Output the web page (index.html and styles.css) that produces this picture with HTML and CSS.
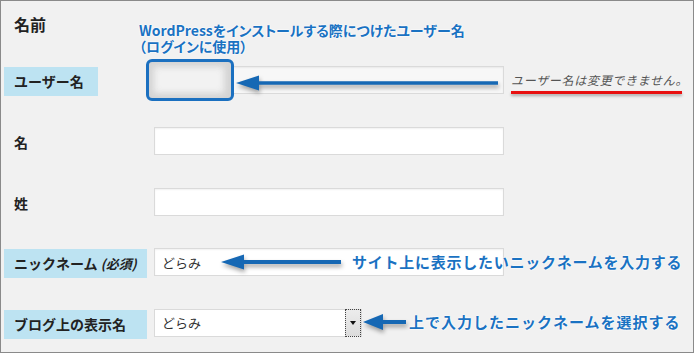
FILE: index.html
```html
<!DOCTYPE html>
<html lang="ja">
<head>
<meta charset="utf-8">
<link rel="stylesheet" href="styles.css">
</head>
<body>
<div class="frame">
  <h2 class="heading">名前</h2>
  <div class="form">
    <div class="row">
      <div class="label-cell"><span class="label label-hl label-short">ユーザー名</span></div>
      <div class="field field-disabled"></div>
      <span class="desc">ユーザー名は変更できません。</span>
    </div>
    <div class="row">
      <div class="label-cell"><span class="label">名</span></div>
      <div class="field"></div>
    </div>
    <div class="row">
      <div class="label-cell"><span class="label">姓</span></div>
      <div class="field"></div>
    </div>
    <div class="row">
      <div class="label-cell"><span class="label label-hl label-wide">ニックネーム <em class="req">(必須)</em></span></div>
      <div class="field"><span class="value">どらみ</span></div>
    </div>
    <div class="row">
      <div class="label-cell"><span class="label label-hl label-wide">ブログ上の表示名</span></div>
      <div class="select"><span class="value">どらみ</span><span class="select-btn"><span class="tri"></span></span></div>
    </div>
  </div>

  <div class="note note-top">WordPressをインストールする際につけたユーザー名<br>（ログインに使用）</div>
  <div class="highlight"><div class="blur"></div></div>
  <svg class="arrow arrow-1" width="268" height="26" viewBox="0 0 268 26">
    <path d="M2 12 L25 4.5 L25 10.2 L264 10.2 L264 13.8 L25 13.8 L25 19.5 Z" fill="#1668b4"/>
  </svg>
  <div class="underline"></div>
  <svg class="arrow arrow-2" width="126" height="26" viewBox="0 0 126 26">
    <path d="M2 12 L25 4.5 L25 10 L122 10 L122 14 L25 14 L25 19.5 Z" fill="#1668b4"/>
  </svg>
  <div class="note note-nick">サイト上に表示したいニックネームを入力する</div>
  <svg class="arrow arrow-3" width="48" height="26" viewBox="0 0 48 26">
    <path d="M2 12 L22 4 L22 10 L45 10 L45 14 L22 14 L22 20 Z" fill="#1668b4"/>
  </svg>
  <div class="note note-select">上で入力したニックネームを選択する</div>
</div>
</body>
</html>
```

FILE: styles.css
```css
* { box-sizing: border-box; }
html, body { margin: 0; padding: 0; background: #fff; }
body { font-family: "Noto Sans CJK JP", "Noto Sans", sans-serif; }

.frame {
  position: relative;
  width: 694px;
  height: 353px;
  border: 1px solid #8a8a8a;
  background: #f1f1f1;
  padding: 12px 0 0 3px;
  overflow: hidden;
}

.heading {
  margin: 0 0 0 10px;
  font-size: 16px;
  line-height: 22px;
  font-weight: 700;
  color: #222;
}

.form {
  margin-top: 31px;
  display: flex;
  flex-direction: column;
  gap: 32.75px;
}

.row {
  display: flex;
  align-items: flex-start;
  height: 28px;
}

.label-cell { width: 150px; flex: none; }

.label {
  display: block;
  height: 29px;
  margin-top: 1px;
  padding-left: 10px;
  font-size: 14px;
  line-height: 29px;
  font-weight: 700;
  color: #222;
  white-space: nowrap;
}
.label-hl { background: #bde3f2; }
.label-short { width: 94px; }
.label-wide { width: 143px; }
.req { font-size: 13px; font-style: italic; }

.field {
  width: 350px;
  height: 28px;
  flex: none;
  border: 1px solid #dadada;
  background: #fff;
  box-shadow: inset 0 1px 2px rgba(0,0,0,0.06);
  padding-left: 7px;
}
.field-disabled { background: #f7f7f7; }

.value {
  font-size: 13px;
  line-height: 26px;
  color: #333;
}

.desc {
  margin-left: 7px;
  font-size: 12px;
  line-height: 28px;
  font-style: italic;
  letter-spacing: 0.7px;
  color: #555;
  white-space: nowrap;
}

.select {
  position: relative;
  width: 208px;
  height: 28px;
  border: 1px solid #dadada;
  background: #fff;
  padding-left: 7px;
  display: flex;
  justify-content: space-between;
}
.select-btn {
  width: 16px;
  height: 28px;
  margin-top: -1px;
  border: 1px dotted #444;
  background: linear-gradient(#ececec, #dcdcdc);
  display: flex;
  align-items: center;
  justify-content: center;
}
.tri {
  width: 0; height: 0;
  border-left: 3.5px solid transparent;
  border-right: 3.5px solid transparent;
  border-top: 4px solid #111;
}

.note {
  position: absolute;
  color: #1a72c2;
  font-weight: 700;
  white-space: nowrap;
  text-shadow: 0 0 2px #fff, 0 0 2px #fff, 0 0 1px #fff;
}
.note-top {
  left: 138px;
  top: 21px;
  font-size: 14px;
  line-height: 16px;
  font-feature-settings: "palt";
}
.note-nick {
  left: 351px;
  top: 252px;
  font-size: 15px;
  line-height: 18px;
  letter-spacing: 0.75px;
}
.note-select {
  left: 408px;
  top: 312px;
  font-size: 15px;
  line-height: 18px;
  letter-spacing: 1px;
}

.highlight {
  position: absolute;
  left: 145px;
  top: 58px;
  width: 88px;
  height: 42px;
  border: 3px solid #1b70c0;
  border-radius: 6px;
  background: #d4d4d4;
  overflow: hidden;
}
.blur {
  position: absolute;
  left: 5px; top: 5px; right: 7px; bottom: 5px;
  background: #f2f2f2;
  filter: blur(3px);
}

.arrow {
  position: absolute;
  filter: drop-shadow(1px 3px 2px rgba(0,0,0,0.35));
}
.arrow-1 { left: 233px; top: 70px; }
.arrow-2 { left: 218px; top: 249px; }
.arrow-3 { left: 360px; top: 309px; }

.underline {
  position: absolute;
  left: 510px;
  top: 90px;
  width: 171px;
  height: 3px;
  background: #e81010;
  box-shadow: 0 2px 3px rgba(0,0,0,0.3);
}
```
